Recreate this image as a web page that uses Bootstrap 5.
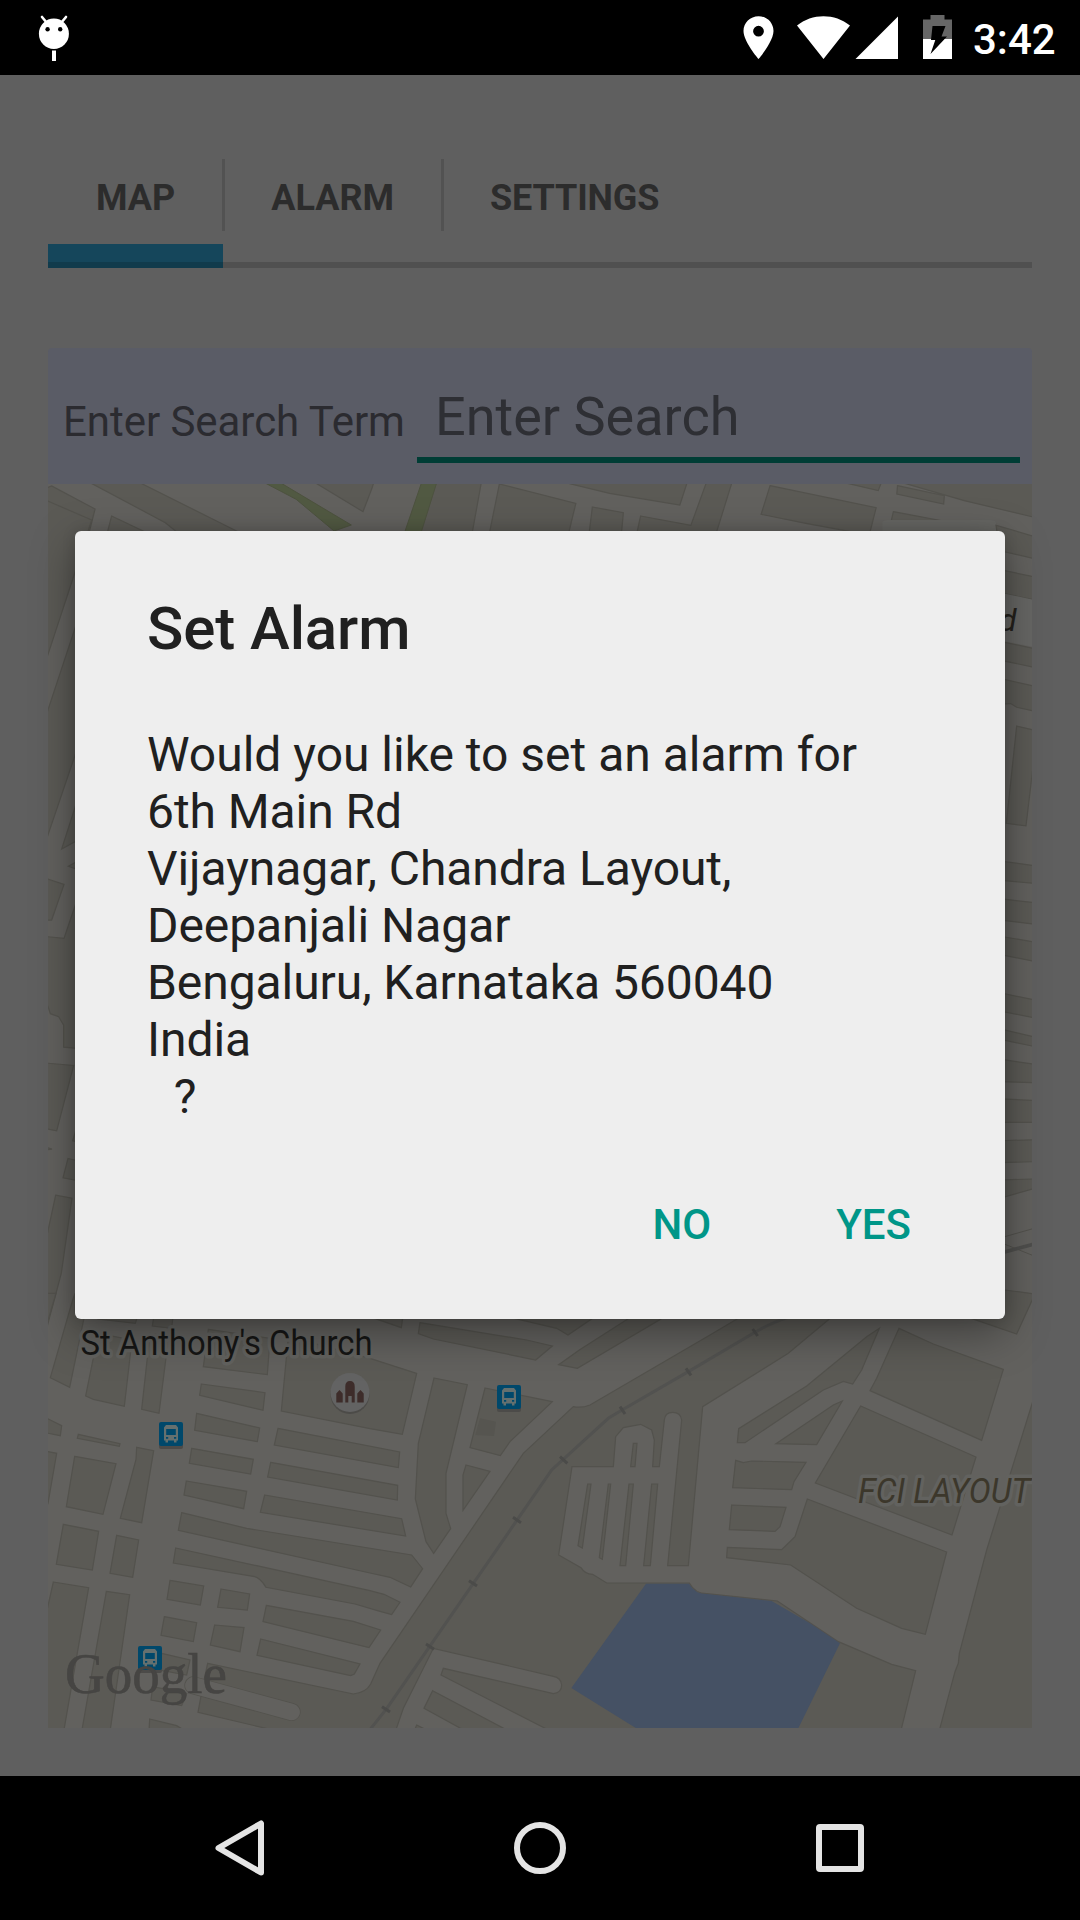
<!DOCTYPE html>
<html lang="en">
<head>
<meta charset="utf-8">
<meta name="viewport" content="width=device-width, initial-scale=1">
<title>Set Alarm</title>
<link rel="stylesheet" href="https://cdn.jsdelivr.net/npm/bootstrap@5.3.0/dist/css/bootstrap.min.css">
<style>
  body { font-family: Roboto, "Noto Sans", sans-serif; background: #5f5f5f; }
  .screen { width: 1080px; height: 1920px; }
  .status-bar { height: 75px; padding: 0 23px 0 36px; background: #000; }
  .clock { font-size: 42px; font-weight: 500; line-height: 1; width: 84px; margin-left: 21px; padding-top: 5px; white-space: nowrap; }
  .status-icons { width: 212px; height: 75px; }
  .app-body { padding: 84px 48px 48px; background: #5f5f5f; }
  .tab-strip { height: 109px; }
  .tab-item { position: relative; height: 109px; padding: 0 48px; color: #2c2c2c; font-size: 36px; font-weight: 700; line-height: 78px; border-radius: 0; }
  .tab-item:last-child { letter-spacing: -.12px; }
  .tab-item + .tab-item::before { content: ""; position: absolute; left: -1px; top: 0; width: 3px; height: 72px; background: #525252; }
  .tab-strip { border-bottom: 6px solid #505050; }
  .tab-item.active::after { content: ""; position: absolute; left: 0; bottom: 0; width: 100%; height: 24px; background: linear-gradient(#15465b 0 18px, #113b4c 18px); }
  .search-row { height: 136px; margin-top: 80px; padding: 0 12px 0 15px; background: #5a5c66; border-radius: 4px 4px 0 0; }
  .search-row label { font-size: 42px; line-height: 50px; letter-spacing: -.05px; color: #2b2b30; width: 354px; padding-top: 49px; white-space: nowrap; }
  .search-field { height: 115px; border: 0; border-bottom: 6px solid #003d35; border-radius: 0; background: transparent; font-size: 54px; padding: 28px 18px 0; color: #2e2f34; }
  .search-field::placeholder { color: #2e2f34; opacity: 1; }
  .map-view { display: block; width: 984px; height: 1244px; }
  .map-view path { vector-effect: non-scaling-stroke; }
  .blk { fill: #5b5a55; stroke: #53524d; stroke-width: 1.2; }
  .halo { paint-order: stroke; stroke: #62625f; stroke-width: 7px; stroke-linejoin: round; }
  .scrim { position: absolute; inset: 74px 0 144px 0; }
  .alarm-dialog { width: 930px; height: 788px; background: #eee; border: 0; border-radius: 6px; box-shadow: 0 14px 44px rgba(0,0,0,.36), 0 0 14px rgba(0,0,0,.14); color: #202020; }
  .alarm-dialog .modal-header { padding: 62px 72px 0; border: 0; }
  .alarm-dialog .modal-title { font-size: 60px; line-height: 72px; font-weight: 500; letter-spacing: -.1px; }
  .alarm-dialog .modal-body { padding: 61px 72px 0; font-size: 48px; line-height: 57px; letter-spacing: -.07px; white-space: pre-line; }
  .alarm-dialog .modal-body::first-line { letter-spacing: -.01px; }
  .last-line { padding-left: 3px; }
  .alarm-dialog .modal-footer { padding: 0 69px 57px 0; border: 0; gap: 75px; }
  .btn-flat { font-size: 42px; font-weight: 500; line-height: 60px; color: #009688; padding: 6px 24px; margin: 0; }
  .nav-bar { height: 144px; background: #000; padding: 0 210px; }
</style>
</head>
<body>
<div class="screen position-relative d-flex flex-column overflow-hidden">

  <header class="status-bar d-flex align-items-center justify-content-between text-white">
    <svg width="36" height="75" viewBox="36 0 36 75">
      <path d="M42 17l5 6M66 17l-5 6" stroke="#fff" stroke-width="2.600" stroke-linecap="round"/>
      <ellipse cx="53.900" cy="33.800" rx="15" ry="15.200" fill="#fff"/>
      <circle cx="47.600" cy="29.300" r="2.200"/><circle cx="60.200" cy="29.300" r="2.200"/>
      <path d="M52 50.500h4v10.500h-4z" fill="#fff"/>
    </svg>
    <div class="d-flex align-items-center">
      <svg class="status-icons" viewBox="740 0 212 75">
        <path fill="#fff" fill-rule="evenodd" d="M758.500 16.200c8.300 0 15 6.500 15 14.800 0 10.600-15 28-15 28s-15-17.400-15-28c0-8.300 6.700-14.800 15-14.800zm0 9.600a5.400 5.400 0 1 0 0 10.800a5.400 5.400 0 1 0 0-10.800z"/>
        <path fill="#fff" d="M797 25.500C812 13 835 13 850 25.500L823.500 59zM855.500 59L898 16.500V59z"/>
        <path fill="#666" d="M930.500 15h14v4.500h7.500V39h-29V19.500h7.500z"/>
        <path fill="#fff" d="M923 39h29v20h-29z"/>
        <path fill="#000" d="M932.500 26h13l-4 10.500h5.500L930.500 54l4.800-14H931z"/>
      </svg>
      <span class="clock">3:42</span>
    </div>
  </header>

  <main class="app-body flex-grow-1">
    <nav class="nav tab-strip flex-nowrap">
      <a class="nav-link tab-item active">MAP</a>
      <a class="nav-link tab-item">ALARM</a>
      <a class="nav-link tab-item">SETTINGS</a>
    </nav>

    <div class="search-row d-flex align-items-start">
      <label class="flex-shrink-0" for="term">Enter Search Term</label>
      <input id="term" class="form-control search-field" placeholder="Enter Search">
    </div>

    <svg class="map-view" viewBox="48 484 984 1244">
      <defs>
        <symbol id="bus" viewBox="0 0 24 27">
          <rect y="3" width="24" height="24" rx="2" fill="#4c4b49"/>
          <rect width="24" height="24" rx="2" fill="#00486b"/>
          <path fill="#65706f" fill-rule="evenodd" d="M7 3h10l2 2.500v13h-1.500v2H15v-2H9v2H6.500v-2H5v-13zM7.200 7v6h9.600V7zM7 15v1.800h2.200V15zm8 0v1.800h2.200V15z"/>
        </symbol>
      </defs>
      <path fill="#62615e" d="M48 484h984v1244H48z"/>

      <!-- north strip -->
      <g transform="translate(0 330) scale(.6888 .33333)">
        <path class="blk" d="M60,480L75,468 138,537 128,620 60,620zM128,455H200L355,615H262L240,578zM162,558L220,615H155zM455,455H543L540,475 527,545zM630,455H699L685,615H608zM725,462L836,520 825,615H710zM815,455H998L987,525 885,490zM860,531L905,548 902,615H855zM930,558L1003,586 1026,455H1063L1039,615H924zM1118,467L1272,533 1262,615 1170,580 1105,553zM1220,455H1280L1275,482zM1303,467L1371,497 1370,522 1302,492zM1297,545L1400,585 1460,615H1289zM1305,455H1510V566L1400,512z"/>
        <path fill="#515942" stroke="#4d523f" d="M384,458H407L510,585 485,603 430,508zM612,458H634L611,610H587z"/>
        <rect x="1281" y="570" width="165" height="80" rx="8" fill="#656562"/>
      </g>
      <!-- west edge -->
      <g transform="translate(0 520) scale(.33333 .52296)">
        <path class="blk" d="M130,-40L275,0 225,100 144,257 130,280zM240,178V422L144,602 130,630V390L144,363zM240,520V610L185,629zM205,662L240,650V670zM130,684L192,697 155,765H130zM130,796L192,800 240,710V1011L191,1008V966L176,950 151,944 144,930 130,920zM130,1038L221,1043 170,1168 130,1163zM240,1140V1190L218,1187zM130,1198L156,1203 130,1205zM204,1221L240,1226V1264L189,1258zM167,1291L216,1297 184,1440 130,1570V1400z"/>
      </g>
      <!-- east edge -->
      <g transform="translate(980 520) scale(.33333 .52296)">
        <path class="blk" d="M48,10L165,32V74L60,59zM60,95L165,109V153L60,139zM60,232L165,246V282L60,268zM60,303L165,318V366L110,358 92,351 60,352zM110,394L165,402V440L138,585 79,580zM60,652L165,661V695L60,689zM60,724L165,732V773L60,765zM60,796L165,807V844L60,831zM60,904L165,918V952L60,939zM60,973L165,989V1007L60,993zM60,1031L165,1041V1076L60,1074zM60,1107L165,1110V1152H60zM60,1187L165,1185V1227L60,1229zM60,1262L165,1260V1278L60,1297z"/>
        <path fill="#666664" d="M60,139L165,153V243L60,230z"/>
        <path fill="none" stroke="#53524d" d="M60,1373L165,1354M75,1385L165,1408"/>
        <path fill="none" stroke="#4f4f4d" stroke-width="3.500" d="M60,1402L165,1384"/>
      </g>
      <!-- south-west blocks -->
      <g transform="translate(40 1300) scale(.33333)">
        <path class="blk" d="M20,-20H48L20,75zM105,-20L98,0 31,233 89,262 135,40H105zM150,40H295L286,70 173,57zM175,100L276,120 253,319 160,298 137,288zM330,100L386,110 357,340 305,328zM343,40H400L395,85 337,78zM505,88L690,115 682,224 490,200zM484,252L675,278 669,331 479,286zM745,110L990,175 1130,220 1087,403 990,386 724,333zM470,340L659,384 652,425 464,391zM714,385L1079,456 1075,503 703,435zM455,445L640,478 632,522 448,490zM692,487L1073,556 1072,600 683,531zM439,543L620,574 611,626 432,585zM674,585L1085,656 1097,708 661,637zM425,638L620,685 1115,765 1148,806 1112,861 1050,832 990,819 415,691zM407,744L650,797 990,872 1032,883 1080,907 1055,944 1020,934 945,912 678,862Q660,832 640,829L400,789zM390,841L491,858 481,915 381,898zM543,867L629,882 622,930 533,922zM373,950L470,968 460,1025 363,1006zM524,975L612,983 600,1055 511,1035zM679,916L940,964 1022,990 987,1043 669,965zM662,1017L960,1092 943,1122 932,1127 651,1066zM365,1060L450,1080 440,1125 358,1110zM338,1160L440,1180 425,1217 333,1200zM329,1257L410,1277 440,1295H327zM10,350L65,377 61,407 10,397zM115,403L240,431 238,439 112,415zM10,452L50,460 24,610 10,640zM104,469L228,491 189,643 79,620zM290,442L341,452 305,668 241,655 288,478zM70,673L176,694 157,810 49,793zM230,706L296,720 278,832 210,820zM40,846L146,863 71,1295H10V980zM199,874L269,884 210,1295H125z"/>
      </g>
      <!-- railway corridor and the blocks round it -->
      <g transform="translate(370 1300) scale(.33333)">
        <path class="blk" d="M-487,1090L-50,1182Q-12,1178 2,1152L30,1090 460,460 610,320Q635,325 660,315L1020,105 1130,40H1400L1378,57 1255,160 998,320 955,797H893L935,360Q932,337 908,337 885,337 883,360L868,500H848L853,420 845,390 812,373 760,383 737,410 730,500H606L566,765 633,803Q645,823 668,823L710,849H958Q975,881 1010,881L1222,903 1405,1025 1565,1093 1637,1112 1592,1295H545L213,1125 220,1105 550,1181Q575,1178 575,1155 573,1133 550,1129L190,1045 100,1225 76,1295H-270L-516,1237 -500,1150z"/>
        <path fill="none" stroke="#53524d" stroke-width="18" stroke-linecap="round" d="M-530,1156L-235,1236"/>
        <path fill="none" stroke="#62615e" stroke-width="16.500" stroke-linecap="round" d="M-530,1156L-235,1236"/>
        <path class="blk" d="M-30,40H100L94,83zM150,68L470,120 547,138 497,180 190,117 145,101zM370,40H690L594,105 560,85zM800,40H890L873,57 622,205 566,194 628,150zM192,234L292,254 228,520V640L242,686 191,760 168,725 136,597 145,430zM345,264L547,305 420,425 391,467 300,443zM288,495L360,514 279,631V525zM653,552H663L637,744 624,737zM715,552H722L697,778 688,773zM777,552H790L767,797H750zM845,552H863L841,797H821zM790,430H801L795,500H782zM188,1172L420,1295H290L162,1225zM140,1275L180,1295H132z"/>
        <path fill="#565550" d="M330,355L378,365 372,408 316,405z"/>
        <path fill="#455164" d="M828,851H957Q975,882 1010,882L1205,903 1320,970 1410,1030 1280,1295H815L604,1164z"/>
        <path fill="none" stroke="#525250" stroke-width="3" d="M-5,1295L50,1226 545,510 715,355 760,328 955,215 1155,97Q1200,70 1260,50"/>
        <path fill="none" stroke="#4b4b49" stroke-width="3" d="M36,1220L60,1236M168,1032L192,1048M297,842L321,858M429,652L453,668M570,470L592,490M750,320L765,342M948,205L963,226M1148,87L1163,108"/>
      </g>
      <!-- south-east blocks -->
      <g transform="translate(700 1300) scale(.33333)">
        <path class="blk" d="M770,40L950,102 1005,-18 915,-30zM597,85L700,132 910,208 845,421 510,272 530,235zM482,318L828,471 756,705 346,549zM322,597L740,756 676,1003 605,985 470,925 272,795 80,773 82,742 245,749 285,710zM538,85L485,210 458,252 430,244 370,270 135,428H112L116,386 320,258 500,110zM427,303L350,434 228,431 400,315zM107,481L130,488 155,483 318,487 282,545 275,569 98,563zM95,615L258,622 240,680 225,694 88,689zM1010,270L995,315 860,750 778,1060 775,1090 765,1115 717,1295H1010z"/>
      </g>

      <use href="#bus" x="159" y="1422" width="24" height="27"/>
      <use href="#bus" x="138" y="1646" width="24" height="27"/>
      <use href="#bus" x="497" y="1385" width="24" height="27"/>
      <circle cx="350" cy="1394.500" r="19.500" fill="#4c4b48"/>
      <circle cx="350" cy="1392.500" r="19.500" fill="#636363"/>
      <path fill="#3d2c2a" d="M336.300 1402.500v-9l3.200-3.500 3.200 3.500v9zM357.300 1402.500v-9l3.200-3.500 3.200 3.500v9zM345.300 1402.500v-16q0-5.500 4.700-5.500t4.700 5.500v16h-3v-6.500h-3.400v6.500z"/>
      <text class="halo" x="80.500" y="1355" font-size="35" fill="#161615" textLength="292" lengthAdjust="spacingAndGlyphs">St Anthony's Church</text>
      <text class="halo" x="858" y="1503" font-size="35" font-style="italic" fill="#3c372b" textLength="172.500" lengthAdjust="spacingAndGlyphs">FCI LAYOUT</text>
      <text x="999" y="631" font-size="32" font-style="italic" fill="#24211c">d</text>
      <text x="65" y="1693" font-family="Liberation Serif, serif" font-size="58" fill="#464543" stroke="#464543" stroke-width=".6" textLength="162" lengthAdjust="spacingAndGlyphs">Google</text>
    </svg>
  </main>

  <footer class="nav-bar d-flex align-items-center justify-content-between flex-shrink-0">
    <svg width="60" height="60" viewBox="210 1818 60 60"><path d="M261 1823.500v49L218.500 1848z" fill="none" stroke="#e4e4e4" stroke-width="6" stroke-linejoin="round"/></svg>
    <svg width="60" height="60" viewBox="510 1818 60 60"><circle cx="540" cy="1848" r="23" fill="none" stroke="#e4e4e4" stroke-width="6"/></svg>
    <svg width="60" height="60" viewBox="810 1818 60 60"><rect x="819" y="1827" width="42" height="42" rx="1" fill="none" stroke="#e4e4e4" stroke-width="6" stroke-linejoin="round"/></svg>
  </footer>

  <div class="scrim d-flex align-items-center justify-content-center">
    <div class="modal-content alarm-dialog" role="dialog" aria-labelledby="alarmTitle">
      <div class="modal-header"><h1 class="modal-title" id="alarmTitle">Set Alarm</h1></div>
      <div class="modal-body">Would you like to set an alarm for
6th Main Rd
Vijaynagar, Chandra Layout, Deepanjali Nagar
Bengaluru, Karnataka 560040
India
<span class="last-line">&nbsp; ?</span></div>
      <div class="modal-footer">
        <button type="button" class="btn btn-flat">NO</button>
        <button type="button" class="btn btn-flat">YES</button>
      </div>
    </div>
  </div>
</div>
<script src="https://cdn.jsdelivr.net/npm/bootstrap@5.3.0/dist/js/bootstrap.bundle.min.js"></script>
</body>
</html>
